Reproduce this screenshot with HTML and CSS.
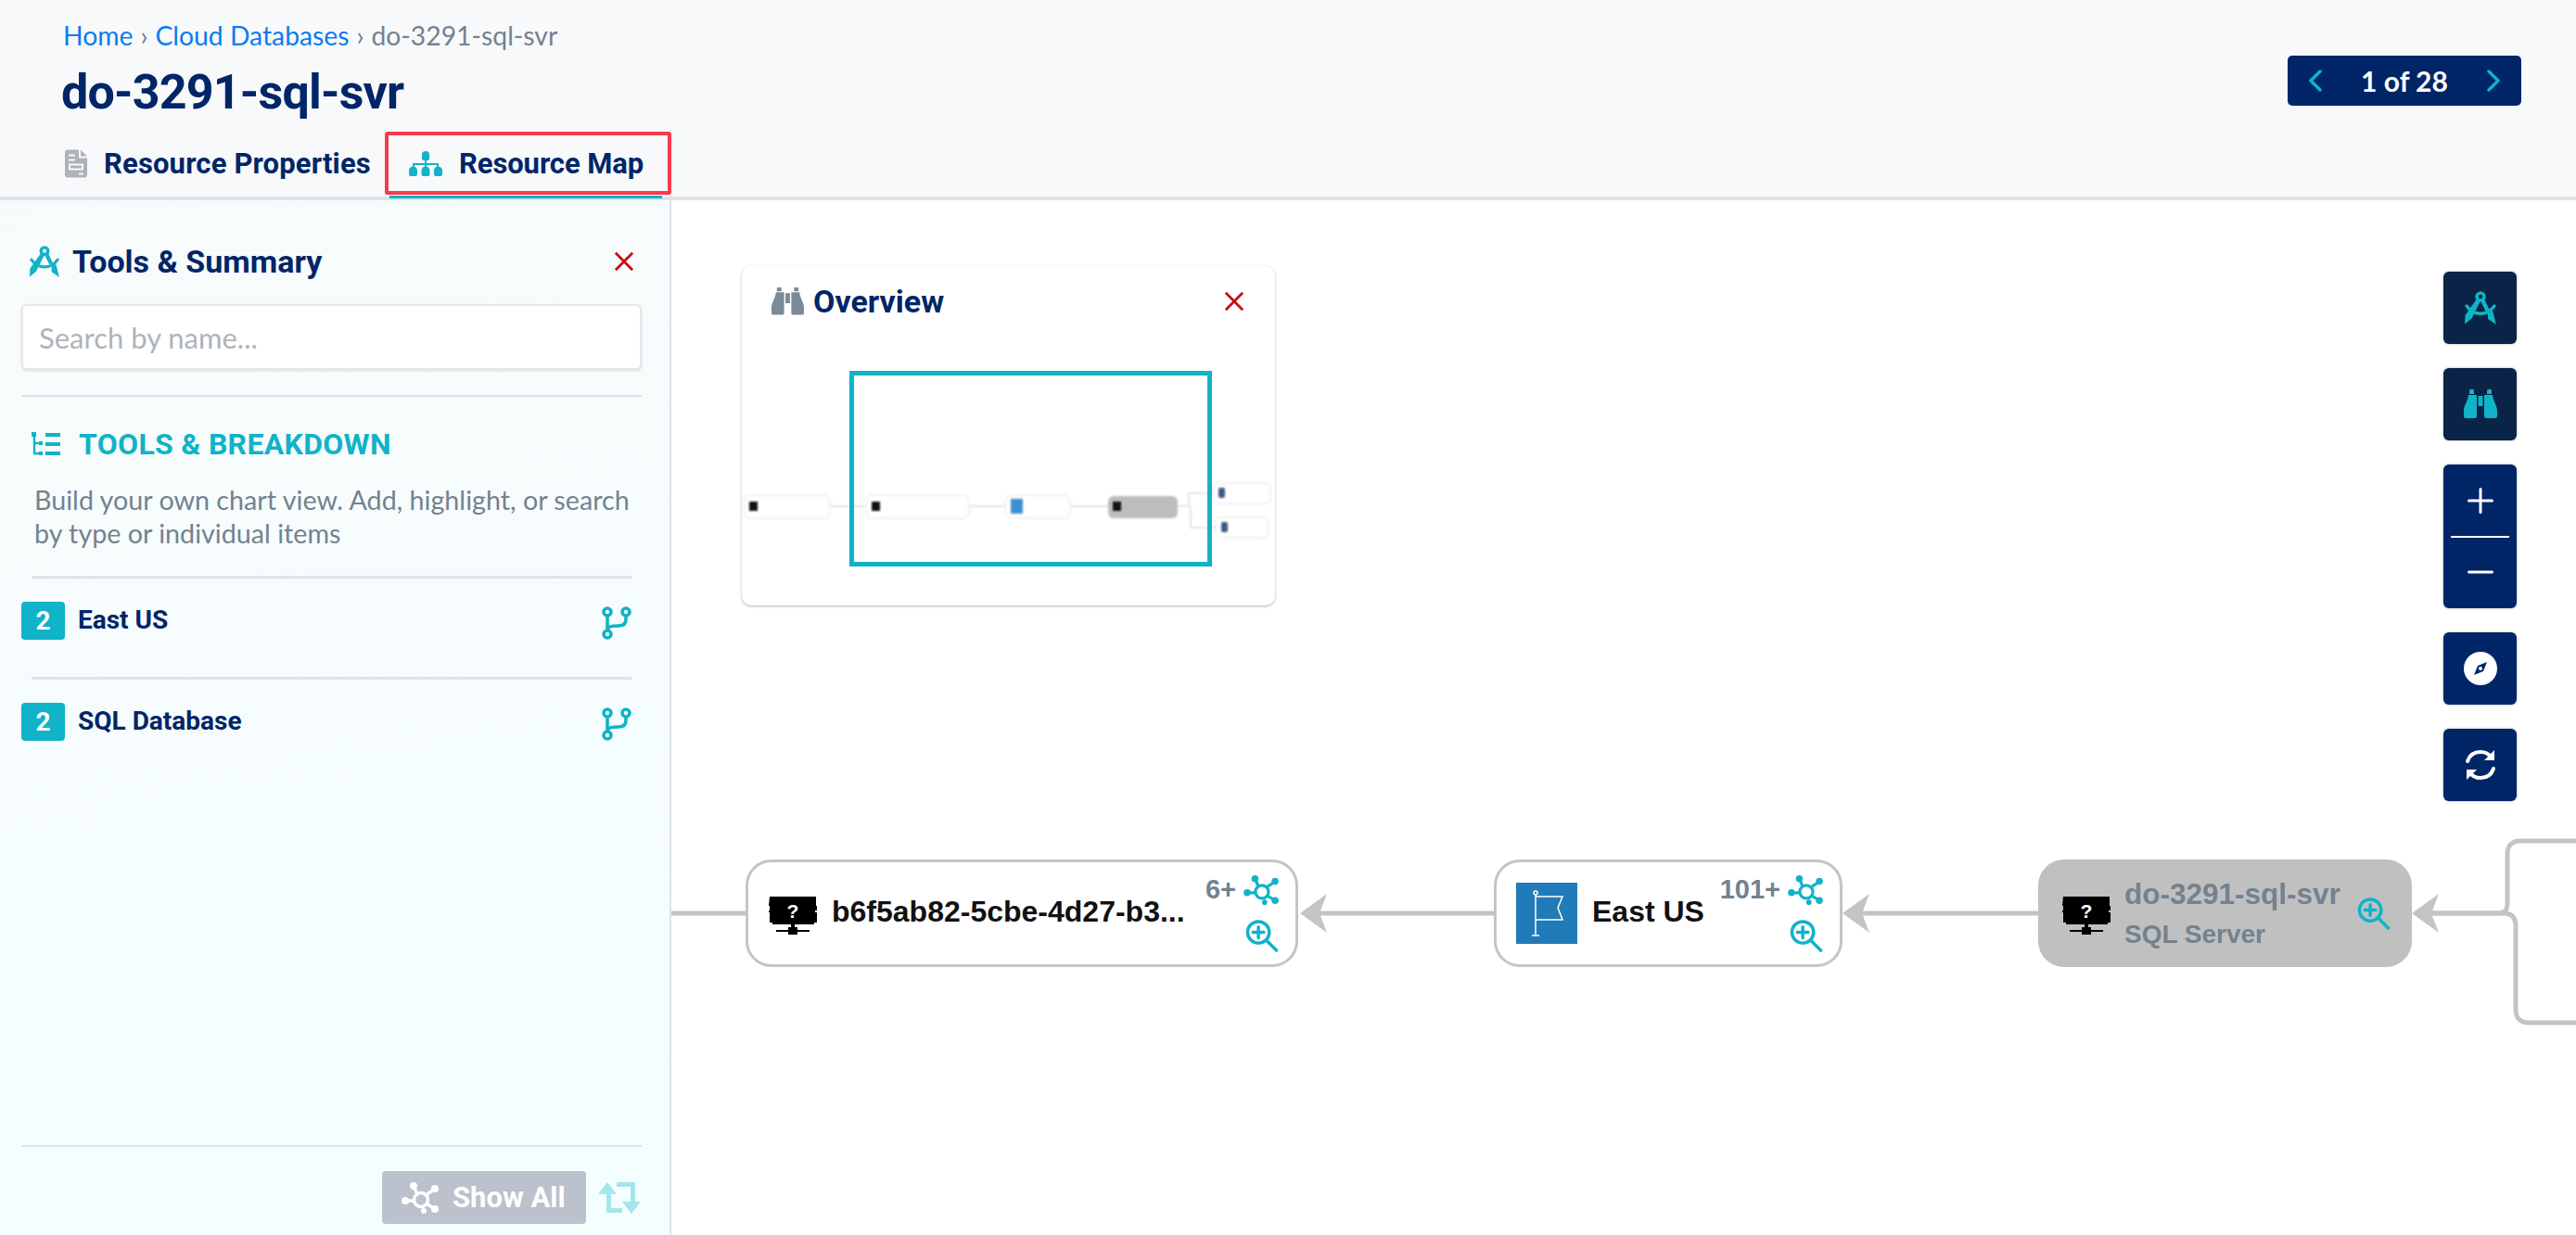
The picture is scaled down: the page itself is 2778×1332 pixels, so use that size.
FILE: index.html
```html
<!DOCTYPE html>
<html lang="en">
<head>
  <meta charset="UTF-8">
  <title>do-3291-sql-svr - Resource Map</title>
  <link rel="stylesheet" href="styles.css">
</head>
<body>
  <!-- Shared icons -->
  <svg class="icon-defs" width="0" height="0">
    <symbol id="i-compass" viewBox="0 0 36 36">
      <circle cx="18" cy="6" r="4" fill="none" stroke="currentColor" stroke-width="3.600"/>
      <path d="M13.500 9l4 2.500-9 18-7.500 6 .5-9.500z" fill="currentColor"/>
      <path d="M22.500 9l-4 2.500 5 10 4-1.500zM26 24l5-3 4 15-9-6z" fill="currentColor"/>
      <path d="M3 16c8 11 22 11 30 0" fill="none" stroke="currentColor" stroke-width="3.400" stroke-linecap="round"/>
    </symbol>
    <symbol id="i-binoculars" viewBox="0 0 36 30">
      <path d="M6 0a3 3 0 0 1 5 0v4H6zM25 0a3 3 0 0 1 5 0v4h-5zM15.500 6h5v11h-5z" fill="currentColor"/>
      <path d="M5 5h9v23a2 2 0 0 1-2 2H2a2 2 0 0 1-2-2v-6c0-6 4-9 5-17zM22 5h9c1 8 5 11 5 17v6a2 2 0 0 1-2 2H24a2 2 0 0 1-2-2z" fill="currentColor"/>
    </symbol>
    <symbol id="i-close" viewBox="0 0 24 24">
      <path d="M2 2l20 20M22 2 2 22" fill="none" stroke="currentColor" stroke-width="3"/>
    </symbol>
    <symbol id="i-branch" viewBox="0 0 32 36">
      <g fill="none" stroke="currentColor" stroke-width="3.600">
        <circle cx="6" cy="6" r="4"/>
        <circle cx="6" cy="30" r="4"/>
        <circle cx="26" cy="6" r="4"/>
        <path d="M6 10v16M26 10v4c0 5-3 7-8 7-6 0-12 0-12 5"/>
      </g>
    </symbol>
    <symbol id="i-hub" viewBox="0 0 40 34">
      <g fill="currentColor">
        <circle cx="13" cy="4" r="4"/>
        <circle cx="36" cy="7" r="4"/>
        <circle cx="36" cy="29" r="4"/>
        <circle cx="4" cy="20" r="4"/>
        <circle cx="24" cy="31" r="3"/>
      </g>
      <g fill="none" stroke="currentColor" stroke-width="3.400">
        <circle cx="21" cy="19" r="7.500"/>
        <path d="M13 4l4 9M35 8l-9 6M35 28l-9-5M4 20h9"/>
      </g>
    </symbol>
    <symbol id="i-zoom" viewBox="0 0 36 36">
      <g fill="none" stroke="currentColor" stroke-width="3.600" stroke-linecap="round">
        <circle cx="14" cy="14" r="12"/>
        <path d="M23 23l11 11"/>
        <path d="M14 8v12M8 14h12"/>
      </g>
    </symbol>
    <symbol id="i-server" viewBox="0 0 52 42">
      <path d="M1 0h50v10h1v5h-2v2h2v11h-3v2H4v-2H1V17H0v-2h1v-5H0z" fill="#000"/>
      <path d="M24 29h4v6h-4zM8 36h13v-3h10v3h13v2H31v3H21v-3H8z" fill="#000"/>
    </symbol>
  </svg>

  <header class="page-header">
    <div class="header-left">
      <nav class="breadcrumb">
        <a href="#">Home</a>
        <span class="crumb-sep">›</span>
        <a href="#">Cloud Databases</a>
        <span class="crumb-sep">›</span>
        <span>do-3291-sql-svr</span>
      </nav>
      <h1 class="page-title">do-3291-sql-svr</h1>
      <div class="tabs">
        <div class="tab">
          <svg class="tab-doc" viewBox="0 0 24 30">
            <path d="M3 0h12v9h9v18a3 3 0 0 1-3 3H3a3 3 0 0 1-3-3V3a3 3 0 0 1 3-3zM17 0l7 7h-7z" fill="#adb3b9"/>
            <path d="M4 5h7v2H4zM4 10h7v2H4zM4 15h16v7H4zM15 25h5v2h-5z" fill="#f8f9fb"/>
            <path d="M6 17h12v3H6z" fill="#adb3b9"/>
          </svg>
          <span>Resource Properties</span>
        </div>
        <div class="tab tab-active">
          <svg class="tab-map" viewBox="0 0 36 28">
            <g fill="#10b3c7">
              <path d="M14 5a4 4 0 0 1 8 0v4a2 2 0 0 1-2 2h-4a2 2 0 0 1-2-2z"/>
              <path d="M0 22a4.500 4.500 0 0 1 9 0v4a2 2 0 0 1-2 2H2a2 2 0 0 1-2-2zM13.500 22a4.500 4.500 0 0 1 9 0v4a2 2 0 0 1-2 2h-5a2 2 0 0 1-2-2zM27 22a4.500 4.500 0 0 1 9 0v4a2 2 0 0 1-2 2h-5a2 2 0 0 1-2-2z"/>
              <path d="M17 10h2v4h13v4h-2v-2H19v2h-2v-2H6v2H4v-4h13z"/>
            </g>
          </svg>
          <span>Resource Map</span>
        </div>
      </div>
    </div>
    <div class="pager">
      <svg class="pager-arrow" viewBox="0 0 14 24"><path d="M12 2 2 12l10 10"/></svg>
      <span class="pager-text">1 of 28</span>
      <svg class="pager-arrow" viewBox="0 0 14 24"><path d="M2 2l10 10L2 22"/></svg>
    </div>
  </header>

  <div class="workspace">
    <!-- Tools sidebar -->
    <aside class="sidebar">
      <div class="sidebar-head">
        <div class="sidebar-title">
          <svg class="title-icon"><use href="#i-compass"/></svg>
          <span>Tools &amp; Summary</span>
        </div>
        <svg class="close-icon"><use href="#i-close"/></svg>
      </div>
      <input class="search-input" type="text" placeholder="Search by name...">
      <div class="section-block">
        <div class="section-title">
          <svg class="section-icon" viewBox="0 0 31 26">
            <path d="M3 3v20h7" fill="none" stroke="#10b3c7" stroke-width="2.400"/>
            <path d="M3 12h7" fill="none" stroke="#10b3c7" stroke-width="2.400"/>
            <path d="M0 0h5v5H0zM15 1h16v4H15zM15 11h16v4H15zM15 21h16v4H15zM8 10h4v4H8zM8 21h4v4H8z" fill="#10b3c7"/>
          </svg>
          <span>TOOLS &amp; BREAKDOWN</span>
        </div>
        <p class="section-text">Build your own chart view. Add, highlight, or search by type or individual items</p>
      </div>
      <div class="summary-row">
        <span class="count-badge">2</span>
        <span class="summary-name">East US</span>
        <svg class="branch-icon"><use href="#i-branch"/></svg>
      </div>
      <div class="summary-row">
        <span class="count-badge">2</span>
        <span class="summary-name">SQL Database</span>
        <svg class="branch-icon"><use href="#i-branch"/></svg>
      </div>
      <div class="sidebar-foot">
        <button class="show-all-btn">
          <svg class="show-all-icon"><use href="#i-hub"/></svg>
          <span>Show All</span>
        </button>
        <svg class="swap-icon" viewBox="0 0 48 34">
          <path d="M11 0l10 13h-6v15h12v5H10V13H1zM21 0h20v21h6L37 34 27 21h9V5H21z" fill="#a5e5ec"/>
        </svg>
      </div>
    </aside>

    <!-- Resource map canvas -->
    <main class="canvas">
      <svg class="edges" viewBox="724 216 2054 1116">
        <g class="edge-lines">
          <path d="M724 985h80"/>
          <path d="M1410 985h201"/>
          <path d="M1996 985h202"/>
          <path d="M2610 985h85c7 0 9-4 9-12v-52c0-9 5-14 14-14h60"/>
          <path d="M2610 985h90c9 0 13 5 13 14v90c0 9 5 14 14 14h51"/>
        </g>
        <g class="edge-heads">
          <path d="M1402 985l29-21-8 21 8 21z"/>
          <path d="M1987 985l29-21-8 21 8 21z"/>
          <path d="M2601 985l29-21-8 21 8 21z"/>
        </g>
      </svg>

      <div class="map-node node-first">
        <svg class="server-icon" viewBox="0 0 52 42">
          <use href="#i-server" width="52" height="42"/>
          <text x="26" y="23" class="server-mark">?</text>
        </svg>
        <span class="node-name">b6f5ab82-5cbe-4d27-b3...</span>
        <div class="node-actions">
          <div class="node-count"><span>6+</span><svg class="hub-icon"><use href="#i-hub"/></svg></div>
          <svg class="zoom-icon"><use href="#i-zoom"/></svg>
        </div>
      </div>

      <div class="map-node node-region">
        <svg class="flag-icon" viewBox="0 0 66 66">
          <rect width="66" height="66" fill="#217bb8"/>
          <g fill="none" stroke="#fff" stroke-width="1.500">
            <circle cx="21" cy="11" r="2"/>
            <path d="M21 13v43M17 57h8M21 15h29l-5 12 5 13H21"/>
          </g>
        </svg>
        <span class="node-name">East US</span>
        <div class="node-actions">
          <div class="node-count"><span>101+</span><svg class="hub-icon"><use href="#i-hub"/></svg></div>
          <svg class="zoom-icon"><use href="#i-zoom"/></svg>
        </div>
      </div>

      <div class="map-node node-current">
        <svg class="server-icon" viewBox="0 0 52 42">
          <use href="#i-server" width="52" height="42"/>
          <text x="26" y="23" class="server-mark">?</text>
        </svg>
        <div class="node-labels">
          <span class="label-name">do-3291-sql-svr</span>
          <span class="label-type">SQL Server</span>
        </div>
        <svg class="zoom-icon"><use href="#i-zoom"/></svg>
      </div>

      <!-- Overview panel -->
      <section class="overview">
        <div class="overview-head">
          <div class="overview-title">
            <svg class="overview-icon"><use href="#i-binoculars"/></svg>
            <span>Overview</span>
          </div>
          <svg class="close-icon"><use href="#i-close"/></svg>
        </div>
        <svg class="mini-map" viewBox="800 287 575 366">
          <g class="mini-edges">
            <path d="M895 546h39M1045 546h39M1154 546h41M1270 546h12v-14h27M1284 546v23h27"/>
          </g>
          <g class="mini-boxes">
            <rect x="802" y="534" width="93" height="25" rx="7"/>
            <rect x="934" y="534" width="111" height="25" rx="7"/>
            <rect x="1084" y="534" width="70" height="25" rx="7"/>
            <rect x="1309" y="521" width="61" height="22" rx="4"/>
            <rect x="1311" y="558" width="57" height="22" rx="4"/>
          </g>
          <rect x="1195" y="535" width="75" height="24" rx="6" fill="#bdbdbd"/>
          <rect x="808" y="541" width="9" height="10" fill="#111"/>
          <rect x="940" y="541" width="9" height="10" fill="#111"/>
          <rect x="1090" y="538" width="13" height="16" fill="#3d8fd0"/>
          <rect x="1200" y="541" width="9" height="10" fill="#111"/>
          <rect x="1314" y="526" width="7" height="11" rx="2" fill="#3f5a85"/>
          <rect x="1317" y="563" width="7" height="11" rx="2" fill="#3f5a85"/>
        </svg>
        <div class="overview-frame"></div>
      </section>

      <!-- Map tools -->
      <div class="map-tools">
        <button class="tool-btn tool-dark"><svg class="tool-icon"><use href="#i-compass"/></svg></button>
        <button class="tool-btn tool-dark"><svg class="tool-icon"><use href="#i-binoculars"/></svg></button>
        <div class="zoom-group">
          <svg class="zoom-sign" viewBox="0 0 28 28"><path d="M1.500 14h25M14 1.500v25"/></svg>
          <div class="zoom-divider"></div>
          <svg class="zoom-sign" viewBox="0 0 28 28"><path d="M1.500 14h25"/></svg>
        </div>
        <button class="tool-btn">
          <svg class="tool-icon" viewBox="0 0 36 36">
            <circle cx="18" cy="18" r="18" fill="#fff"/>
            <path d="M25 11l-4 10-10 4 4-10z" fill="#002667"/>
            <circle cx="18" cy="18" r="2" fill="#fff"/>
          </svg>
        </button>
        <button class="tool-btn">
          <svg class="tool-icon" viewBox="0 0 36 36">
            <g fill="none" stroke="#fff" stroke-width="4" stroke-linecap="round">
              <path d="M4 14C6 8 11 4 18 4c5 0 9 2 12 6"/>
              <path d="M32 22c-2 6-7 10-14 10-5 0-9-2-12-6"/>
            </g>
            <path d="M33 2v11H22zM3 34V23h11z" fill="#fff"/>
          </svg>
        </button>
      </div>
    </main>
  </div>
</body>
</html>
```

FILE: styles.css
```css
* {
  box-sizing: border-box;
}

html, body {
  margin: 0;
  padding: 0;
  height: 100%;
}

body {
  display: flex;
  flex-direction: column;
  overflow: hidden;
  background: #ffffff;
  font-family: 'Lato', sans-serif;
  color: #002667;
}

.icon-defs {
  position: absolute;
}

.server-mark {
  font-family: 'Liberation Sans', sans-serif;
  font-size: 21px;
  font-weight: bold;
  fill: #ffffff;
  text-anchor: middle;
}

/* Header */
.page-header {
  display: flex;
  justify-content: space-between;
  height: 216px;
  flex-shrink: 0;
  padding: 0 59px 0 66px;
  background: #f8f9fb;
  border-bottom: 4px solid #dfe2e8;
}

.breadcrumb {
  display: flex;
  gap: 8px;
  height: 34px;
  margin: 21px 0 0 2px;
  font-size: 28.3px;
  line-height: 34px;
  color: #73828f;
}

.breadcrumb a {
  color: #0a7cf0;
  text-decoration: none;
}

.page-title {
  margin: 7px 0 0;
  height: 80px;
  font-family: 'Roboto', sans-serif;
  font-size: 52px;
  line-height: 76px;
  font-weight: 700;
  letter-spacing: -0.8px;
}

.tabs {
  display: flex;
  height: 68px;
}

.tab {
  display: flex;
  align-items: center;
  font-family: 'Roboto', sans-serif;
  font-size: 31px;
  font-weight: 700;
  letter-spacing: 0.15px;
  width: 349px;
  padding-left: 4px;
}

.tab-doc {
  width: 24px;
  height: 31px;
  margin-right: 18px;
}

.tab-active {
  position: relative;
  width: 309px;
  padding-left: 22px;
  border: 4px solid #f93a4b;
  border-radius: 3px;
  letter-spacing: -0.1px;
}

.tab-active::after {
  content: "";
  position: absolute;
  left: 1px;
  right: 6px;
  bottom: -10px;
  height: 5px;
  background: linear-gradient(#10b3c7 50%, #c5e8ee 50%);
}

.tab-map {
  width: 36px;
  height: 28px;
  margin-right: 18px;
}

.pager {
  display: flex;
  align-items: center;
  justify-content: space-between;
  width: 252px;
  height: 54px;
  margin-top: 60px;
  padding: 0 23px;
  background: #002667;
  border-radius: 5px;
  color: #ffffff;
}

.pager-text {
  font-size: 30px;
  font-weight: 700;
}

.pager-arrow {
  width: 14px;
  height: 24px;
  fill: none;
  stroke: #10b3c7;
  stroke-width: 3.500;
  stroke-linecap: round;
  stroke-linejoin: round;
}

/* Main area */
.workspace {
  display: flex;
  flex: 1;
  min-height: 0;
}

.sidebar {
  display: flex;
  flex-direction: column;
  width: 724px;
  flex-shrink: 0;
  padding: 0 30px 12px 23px;
  background: linear-gradient(170deg, #f8fbfc 0%, #f4feff 100%);
  border-right: 2px solid #dfe2e8;
}

.sidebar-head {
  display: flex;
  align-items: center;
  justify-content: space-between;
  height: 112px;
  padding: 20px 8px 0 8px;
}

.sidebar-title {
  display: flex;
  align-items: center;
  gap: 13px;
  font-family: 'Roboto', sans-serif;
  font-size: 34px;
  font-weight: 700;
}

.title-icon {
  width: 34px;
  height: 34px;
  color: #10b3c7;
}

.close-icon {
  width: 22px;
  height: 22px;
  color: #c80d0d;
}

.search-input {
  width: 100%;
  height: 71px;
  flex-shrink: 0;
  padding: 0 17px;
  background: #ffffff;
  border: 2px solid #e4e7eb;
  border-radius: 6px;
  box-shadow: 0 1px 3px rgba(0, 0, 0, 0.12);
  font-family: 'Lato', sans-serif;
  font-size: 31px;
  outline: none;
}

.search-input::placeholder {
  color: #aeb4b9;
}

.section-block {
  margin-top: 27px;
  padding: 36px 5px 0 11px;
  height: 195px;
  border-top: 2px solid #dfe2e8;
}

.section-title {
  display: flex;
  align-items: center;
  gap: 20px;
  height: 30px;
  font-family: 'Roboto', sans-serif;
  font-size: 32px;
  font-weight: 700;
  letter-spacing: 0.3px;
  color: #10b3c7;
}

.section-icon {
  width: 31px;
  height: 26px;
}

.section-text {
  margin: 27px 0 0 3px;
  font-size: 28.7px;
  line-height: 36px;
  color: #73828f;
}

.summary-row {
  position: relative;
  display: flex;
  align-items: flex-start;
  height: 109px;
  padding-top: 28px;
}

.summary-row::before {
  content: "";
  position: absolute;
  top: 0;
  left: 11px;
  width: 647px;
  height: 3px;
  background: #dfe2e8;
}

.count-badge {
  display: flex;
  align-items: center;
  justify-content: center;
  width: 47px;
  height: 41px;
  border-radius: 4px;
  background: #10b3c7;
  color: #ffffff;
  font-family: 'Roboto', sans-serif;
  font-size: 28px;
  font-weight: 700;
}

.summary-name {
  flex: 1;
  margin-left: 14px;
  font-family: 'Roboto', sans-serif;
  font-size: 28px;
  line-height: 40px;
  font-weight: 700;
}

.branch-icon {
  width: 32px;
  height: 36px;
  margin: 5px 11px 0 0;
  color: #10b3c7;
}

.sidebar-foot {
  display: flex;
  align-items: center;
  justify-content: flex-end;
  gap: 12px;
  margin-top: auto;
  padding-top: 26px;
  border-top: 2px solid #dfe2e8;
}

.show-all-btn {
  display: flex;
  align-items: center;
  gap: 15px;
  width: 220px;
  height: 57px;
  padding: 0 0 0 21px;
  background: #bbc1cd;
  border: none;
  border-radius: 4px;
  font-family: 'Roboto', sans-serif;
  font-size: 31px;
  font-weight: 700;
  color: #ffffff;
}

.show-all-icon {
  width: 40px;
  height: 34px;
}

.swap-icon {
  width: 48px;
  height: 34px;
}

/* Canvas */
.canvas {
  position: relative;
  flex: 1;
  min-width: 0;
  overflow: hidden;
  background: #ffffff;
}

.edges {
  position: absolute;
  top: 0;
  left: 0;
  width: 2054px;
  height: 1116px;
}

.edge-lines path {
  fill: none;
  stroke: #c4c4c4;
  stroke-width: 5;
}

.edge-heads path {
  fill: #c4c4c4;
}

.map-node {
  position: absolute;
  top: 711px;
  display: flex;
  align-items: center;
  height: 116px;
  background: #ffffff;
  border: 3px solid #c4c4c4;
  border-radius: 28px;
  font-family: 'Liberation Sans', sans-serif;
  font-weight: bold;
  color: #111111;
}

.node-first {
  left: 80px;
  width: 596px;
  padding-left: 22px;
}

.node-region {
  left: 887px;
  width: 376px;
  padding-left: 21px;
}

.node-current {
  left: 1474px;
  width: 403px;
  padding-left: 23px;
  background: #c0c0c0;
  border-color: #c0c0c0;
}

.server-icon {
  width: 52px;
  height: 42px;
  margin-top: 6px;
  flex-shrink: 0;
}

.flag-icon {
  width: 66px;
  height: 66px;
  flex-shrink: 0;
}

.node-name {
  flex: 1;
  margin-left: 16px;
  margin-top: -4px;
  font-size: 32px;
  white-space: nowrap;
}

.node-labels {
  display: flex;
  flex-direction: column;
  gap: 9px;
  flex: 1;
  margin-left: 15px;
  color: #73828f;
}

.label-name {
  font-size: 31.5px;
}

.label-type {
  font-size: 28px;
}

.node-actions {
  display: flex;
  flex-direction: column;
  align-items: flex-end;
  gap: 16px;
  padding-right: 17px;
}

.node-count {
  display: flex;
  align-items: center;
  gap: 7px;
  font-size: 29px;
  color: #73828f;
}

.hub-icon {
  width: 40px;
  height: 32px;
  color: #10b3c7;
}

.zoom-icon {
  width: 36px;
  height: 35px;
  color: #10b3c7;
}

.node-actions .zoom-icon {
  margin-right: 1px;
}

.node-current .zoom-icon {
  margin-right: 20px;
}

/* Overview */
.overview {
  position: absolute;
  top: 71px;
  left: 76px;
  width: 575px;
  height: 366px;
  background: #ffffff;
  border-radius: 10px;
  box-shadow: 0 1px 3px rgba(0, 0, 0, 0.3);
}

.overview-head {
  display: flex;
  align-items: center;
  justify-content: space-between;
  padding: 18px 33px 0 32px;
}

.overview-title {
  display: flex;
  align-items: center;
  gap: 10px;
  font-family: 'Roboto', sans-serif;
  font-size: 34px;
  font-weight: 700;
}

.overview-icon {
  width: 35px;
  height: 30px;
  color: #7a8a98;
}

.mini-map {
  position: absolute;
  top: 0;
  left: 0;
  width: 575px;
  height: 366px;
  filter: blur(0.8px);
}

.mini-edges path {
  fill: none;
  stroke: #dcdcdc;
  stroke-width: 1.500;
}

.mini-boxes rect {
  fill: #ffffff;
  stroke: #eeeeee;
  stroke-width: 1.500;
}

.overview-frame {
  position: absolute;
  top: 113px;
  left: 116px;
  width: 391px;
  height: 211px;
  border: 5px solid #10b3c7;
}

/* Map tools */
.map-tools {
  position: absolute;
  top: 77px;
  right: 64px;
  display: flex;
  flex-direction: column;
  gap: 26px;
  width: 79px;
}

.tool-btn {
  display: flex;
  align-items: center;
  justify-content: center;
  width: 79px;
  height: 78px;
  padding: 0;
  background: #002667;
  border: none;
  border-radius: 6px;
  box-shadow: 0 0 3px rgba(0, 0, 0, 0.3);
}

.tool-dark {
  background: #0a2447;
  color: #10b3c7;
}

.tool-icon {
  width: 36px;
  height: 36px;
}

.zoom-group {
  display: flex;
  flex-direction: column;
  align-items: center;
  justify-content: space-between;
  height: 155px;
  padding: 25px 0;
  background: #002667;
  border-radius: 6px;
  box-shadow: 0 0 3px rgba(0, 0, 0, 0.3);
}

.zoom-sign {
  width: 28px;
  height: 28px;
  fill: none;
  stroke: #ffffff;
  stroke-width: 3;
  stroke-linecap: round;
}

.zoom-divider {
  width: 63px;
  height: 2px;
  background: #ffffff;
}
```
